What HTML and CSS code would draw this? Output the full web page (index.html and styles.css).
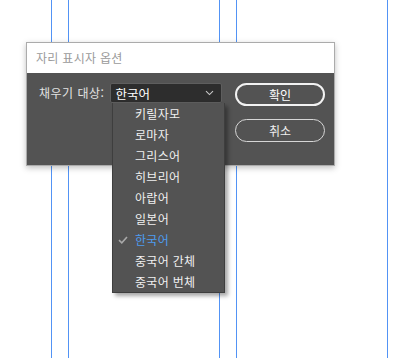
FILE: index.html
```html
<!DOCTYPE html>
<html lang="ko">
<head>
<meta charset="utf-8">
<link rel="stylesheet" href="styles.css">
</head>
<body>
<div class="canvas">
  <div class="guide g1"></div>
  <div class="guide g2"></div>
  <div class="guide g3"></div>
  <div class="guide g4"></div>
  <div class="guide g5"></div>

  <div class="dialog">
    <div class="titlebar">자리 표시자 옵션</div>
    <div class="body">
      <div class="row">
        <span class="label">채우기 대상:</span>
        <div class="select">
          <span class="value">한국어</span>
          <svg class="chev" width="9" height="6" viewBox="0 0 9 6"><path d="M1 1.2 L4.5 4.6 L8 1.2" fill="none" stroke="#c8c8c8" stroke-width="1.1"/></svg>
        </div>
      </div>
      <div class="buttons">
        <button class="btn primary">확인</button>
        <button class="btn">취소</button>
      </div>
    </div>
  </div>

  <ul class="menu">
    <li>키릴자모</li>
    <li>로마자</li>
    <li>그리스어</li>
    <li>히브리어</li>
    <li>아랍어</li>
    <li>일본어</li>
    <li class="selected"><svg class="check" width="10" height="8" viewBox="0 0 10 8"><path d="M1 4.2 L3.8 6.8 L9 1" fill="none" stroke="#a9a9a9" stroke-width="1.6"/></svg>한국어</li>
    <li>중국어 간체</li>
    <li>중국어 번체</li>
  </ul>
</div>
</body>
</html>
```
FILE: styles.css
```css
html, body {
  margin: 0;
  padding: 0;
  background: #ffffff;
}
body {
  font-family: "Noto Sans CJK KR", "Noto Sans", sans-serif;
  font-size: 12px;
}
.canvas {
  position: relative;
  width: 394px;
  height: 358px;
  overflow: hidden;
}
.guide {
  position: absolute;
  top: 0;
  bottom: 0;
  width: 1px;
  background: #5293f5;
}
.g1 { left: 51px; }
.g2 { left: 68px; }
.g3 { left: 219px; }
.g4 { left: 236px; }
.g5 { left: 387px; }

.dialog {
  position: absolute;
  left: 26px;
  top: 42px;
  width: 307px;
  border: 1px solid #ababab;
  box-shadow: 0 2px 6px rgba(0,0,0,0.25);
  display: flex;
  flex-direction: column;
}
.titlebar {
  height: 30px;
  background: #ffffff;
  color: #9a9a9a;
  line-height: 30px;
  padding-left: 9px;
  letter-spacing: 0.3px;
}
.body {
  background: #535353;
  height: 92px;
  display: flex;
  justify-content: space-between;
  padding: 10px 9px 0 12px;
  box-sizing: border-box;
}
.row {
  display: flex;
  align-items: flex-start;
  gap: 6px;
}
.label {
  color: #e2e2e2;
  line-height: 20px;
  letter-spacing: 0.5px;
}
.select {
  height: 18px;
  background: #2d2d2d;
  border: 1px solid #5e5e5e;
  border-radius: 2px;
  display: flex;
  align-items: center;
  justify-content: space-between;
  padding: 0 7px 0 4px;
  box-sizing: content-box;
  width: 99px;
}
.value {
  color: #ffffff;
  font-size: 12.5px;
}
.chev {
  display: block;
}
.buttons {
  display: flex;
  flex-direction: column;
  gap: 13px;
}
.btn {
  width: 90px;
  height: 23px;
  border-radius: 12px;
  background: transparent;
  border: 1px solid #d6d6d6;
  color: #eeeeee;
  font-family: inherit;
  font-size: 12px;
  padding: 0;
  line-height: 20px;
}
.btn.primary {
  border: 2px solid #f2f2f2;
  color: #ffffff;
}

.menu {
  position: absolute;
  left: 112px;
  top: 103px;
  width: 111px;
  margin: 0;
  padding: 0;
  list-style: none;
  background: #535353;
  border: 1px solid #3e3e3e;
  border-top: none;
  box-shadow: 3px 3px 4px rgba(0,0,0,0.35);
}
.menu li {
  position: relative;
  height: 21px;
  line-height: 21px;
  padding-left: 22px;
  color: #f0f0f0;
  letter-spacing: 0.3px;
}
.menu li.selected {
  color: #4d9cf0;
}
.check {
  position: absolute;
  left: 5px;
  top: 7px;
}
```
